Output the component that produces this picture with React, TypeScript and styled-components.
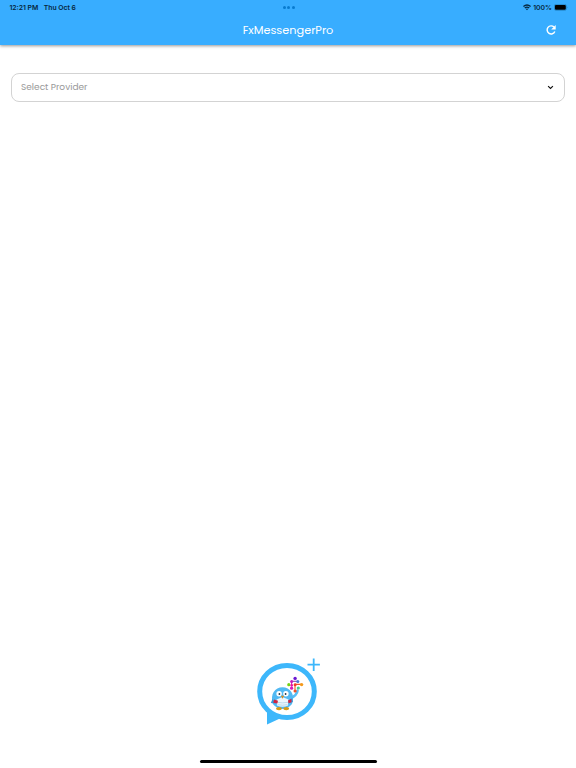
import React from 'react';
import styled, { createGlobalStyle } from 'styled-components';

const GlobalStyle = createGlobalStyle`
  * { box-sizing: border-box; }
  html, body { margin: 0; background: #fff; }
  body { overflow: hidden; font-family: Poppins, Inter, sans-serif; }
`;

const Screen = styled.div`
  display: flex;
  flex-direction: column;
  width: 100%;
  height: 100vh;
  background: #fff;
`;

const Header = styled.header`
  flex: none;
  height: 45px;
  background: #38adff;
  box-shadow: 0 1px 3px rgba(0, 0, 0, 0.42);
`;

const StatusBar = styled.div`
  display: grid;
  grid-template-columns: 1fr auto 1fr;
  align-items: center;
  height: 14px;
  padding: 0 8.5px 0 9.5px;
  color: #06263c;
  font: 600 6.8px/14px Inter, sans-serif;
`;

const StatusGroup = styled.div<{ $end?: boolean }>`
  display: flex;
  align-items: center;
  justify-content: ${({ $end }) => ($end ? 'flex-end' : 'flex-start')};
  gap: ${({ $end }) => ($end ? '1.7px' : '5.5px')};
  white-space: nowrap;

  span {
    padding-top: 1px;
  }
`;

const Dots = styled.div`
  display: flex;
  gap: 1.5px;
`;

const Dot = styled.i`
  width: 3px;
  height: 3px;
  border-radius: 50%;
  background: #087bcf;
`;

const TitleBar = styled.div`
  display: grid;
  grid-template-columns: 1fr auto 1fr;
  align-items: center;
  height: 31px;
  padding: 0 19px;
`;

const Title = styled.h1`
  grid-column: 2;
  margin: 0;
  color: #fff;
  font-size: 11.3px;
  font-weight: 400;
  line-height: 18px;
`;

const IconButton = styled.button`
  justify-self: end;
  display: flex;
  padding: 0;
  border: 0;
  background: none;
`;

const Main = styled.main`
  flex: 1;
  display: flex;
  flex-direction: column;
  justify-content: space-between;
  padding: 28px 11px 0;
`;

const Select = styled.button`
  display: flex;
  align-items: center;
  justify-content: space-between;
  width: 100%;
  height: 29px;
  padding: 0 10px 1px 9px;
  border: 1px solid #d3d3d3;
  border-radius: 8px;
  background: #fff;
  color: #999;
  font: 400 9px/14px Poppins, Inter, sans-serif;
`;

const Mascot = styled.div`
  display: flex;
  justify-content: center;
  padding: 0 0 28px 2px;
`;

const HomeArea = styled.footer`
  flex: none;
  display: flex;
  justify-content: center;
  height: 8px;
`;

const HomeIndicator = styled.div`
  width: 177px;
  height: 3px;
  border-radius: 2px;
  background: #000;
`;

const WifiIcon = () => (
  <svg width="8" height="7" viewBox="0 0 8 7" fill="none" stroke="#06263c" strokeWidth="1.35">
    <path d="M.4 2.5Q4 -.6 7.6 2.5M1.8 4.1Q4 2.2 6.2 4.1" />
    <path d="M2.9 5Q4 4.2 5.1 5L4 6.2Z" fill="#06263c" stroke="none" />
  </svg>
);

const BatteryIcon = () => (
  <svg width="14" height="7" viewBox="0 0 14 7">
    <rect x=".3" y=".4" width="12.1" height="6" rx="1.7" fill="none" stroke="#1d79b5" strokeWidth=".6" />
    <rect x=".9" y="1" width="10.9" height="4.8" rx="1.1" fill="#000" />
    <path d="M13 2.5q.9.9 0 1.8z" fill="#1d79b5" />
  </svg>
);

const RefreshIcon = () => (
  <svg width="12" height="12" viewBox="0 0 12 12">
    <path d="M9 3.1A4 4 0 1 0 9.8 7.5" fill="none" stroke="#fff" strokeWidth="1.45" />
    <path d="M10.7 1v4.5H6.2z" fill="#fff" />
  </svg>
);

const ChevronIcon = () => (
  <svg width="7" height="5" viewBox="0 0 7 5">
    <path d="M1.1 1.1 3.5 3.5 5.9 1.1" fill="none" stroke="#111" strokeWidth="1.15" />
  </svg>
);

const MascotLogo = () => (
  <svg width="78" height="80" viewBox="0 0 78 80" role="img" aria-label="Add provider">
    <path d="M17 57v15.5L31 66l-7-7z" fill="#3db7fb" />
    <ellipse cx="37" cy="39.5" rx="27.3" ry="26.1" fill="#fff" stroke="#3db7fb" strokeWidth="5" />
    <path d="M63.7 6.5v12.4M57.5 12.7h12.4" stroke="#3db7fb" strokeWidth="1.8" />
    <path d="M40 46.5Q47 43.5 47.6 38.5" fill="none" stroke="#58bef7" strokeWidth="2.5" strokeLinecap="round" />
    <path d="M22.8 52C19.8 42 25 35.2 32.5 35.2S45.5 42 42 52Q38 57 32.5 57T22.8 52z" fill="#51b9f3" />
    <path d="m22.5 47-1.7 4 5 .5M42 46l1 4-5 1.5" fill="#349bd8" />
    <path d="M26.5 47.5 32.5 45l6 2.5-.5 6q-5.5 2.5-11 0z" fill="#edf7fd" />
    <path d="M27 50.3q5.5 1.2 11 0M27.5 52.7q5 1 10 0" fill="none" stroke="#9bc7df" strokeWidth=".6" />
    <path d="M24 47.4l4 1.4-.7 2.7-4-.8zM41.3 46.8 38 48.4l.5 2.8 3.1-1z" fill="#d02540" />
    <circle cx="29.1" cy="41.8" r="2.7" fill="#fff" />
    <circle cx="35.9" cy="41.8" r="2.7" fill="#fff" />
    <circle cx="29.4" cy="42" r=".9" fill="#263744" />
    <circle cx="35.6" cy="42" r=".9" fill="#263744" />
    <path d="M30.8 43.7h3.4l-1.7 3z" fill="#d58b1d" />
    <ellipse cx="29" cy="56.6" rx="2.9" ry="1.7" fill="#d69b18" />
    <ellipse cx="36.3" cy="56.6" rx="2.9" ry="1.7" fill="#d69b18" />
    <g fill="none" strokeWidth="1.1">
      <path d="M41.6 29.3v4.4" stroke="#df14b0" />
      <path d="M41.6 29.3h6" stroke="#884bb5" />
      <path d="M45 39V32.4h6.6" stroke="#f45528" />
      <path d="M41.6 34.5V37" stroke="#df14b0" />
    </g>
    <g>
      <circle cx="45.1" cy="26.4" r="1.7" fill="#6b19d2" />
      <circle cx="41.6" cy="29.4" r="1.5" fill="#c41bbb" />
      <circle cx="47.8" cy="29.4" r="1.5" fill="#487cd8" />
      <circle cx="38.8" cy="32.7" r="1.6" fill="#75d315" />
      <circle cx="41.7" cy="33.3" r="1.3" fill="#e913a4" />
      <circle cx="45.1" cy="32.7" r="1.5" fill="#ef3a24" />
      <circle cx="51.6" cy="32.6" r="1.7" fill="#f49a1c" />
      <circle cx="41.6" cy="36.2" r="1.6" fill="#d619b8" />
      <circle cx="48.3" cy="36" r="1.6" fill="#46d184" />
      <circle cx="45.1" cy="39" r="1.6" fill="#f05228" />
    </g>
  </svg>
);

export default function App() {
  return (
    <Screen>
      <GlobalStyle />
      <Header>
        <StatusBar>
          <StatusGroup><span>12:21 PM</span><span>Thu Oct 6</span></StatusGroup>
          <Dots><Dot /><Dot /><Dot /></Dots>
          <StatusGroup $end><WifiIcon /><span>100%</span><BatteryIcon /></StatusGroup>
        </StatusBar>
        <TitleBar>
          <Title>FxMessengerPro</Title>
          <IconButton aria-label="Refresh"><RefreshIcon /></IconButton>
        </TitleBar>
      </Header>
      <Main>
        <Select><span>Select Provider</span><ChevronIcon /></Select>
        <Mascot><MascotLogo /></Mascot>
      </Main>
      <HomeArea><HomeIndicator /></HomeArea>
    </Screen>
  );
}
